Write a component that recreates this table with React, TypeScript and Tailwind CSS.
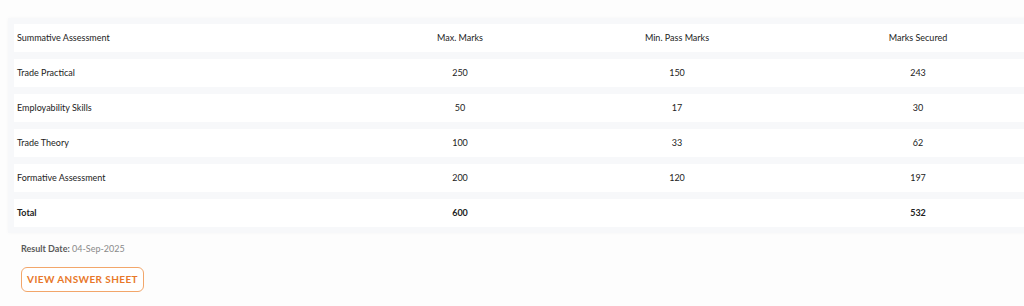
import { FC } from 'react'

type Row = { name: string; max: string; min: string; secured: string; bold?: boolean }

const rows: Row[] = [
  { name: 'Trade Practical', max: '250', min: '150', secured: '243' },
  { name: 'Employability Skills', max: '50', min: '17', secured: '30' },
  { name: 'Trade Theory', max: '100', min: '33', secured: '62' },
  { name: 'Formative Assessment', max: '200', min: '120', secured: '197' },
  { name: 'Total', max: '600', min: '', secured: '532', bold: true },
]

// fixed column widths, table runs past the right edge like the original
const cols = 'grid grid-cols-[336px_220px_214px_268px]'

const TableRow: FC<{ r: Row }> = ({ r }) => (
  <div className={`${cols} h-[28px] items-center bg-white text-[9px] text-[#222] ${r.bold ? 'font-bold' : ''}`}>
    <div className="pl-[3px]">{r.name}</div>
    <div className="text-center">{r.max}</div>
    <div className="text-center">{r.min}</div>
    <div className="text-center">{r.secured}</div>
  </div>
)

export default function App() {
  return (
    <div className="h-[306px] w-[1024px] overflow-hidden bg-[#fdfdfd] font-['Lato',sans-serif]">
      <div className="pt-[18px] pl-[8px]">
        <div className="flex w-[1050px] flex-col gap-[7px] bg-[#f7f8fa] py-[6px] pl-[6px] shadow-[0_0_4px_rgba(0,0,0,0.03)]">
          <TableRow r={{ name: 'Summative Assessment', max: 'Max. Marks', min: 'Min. Pass Marks', secured: 'Marks Secured' }} />
          {rows.map((r) => (
            <TableRow key={r.name} r={r} />
          ))}
        </div>
      </div>
      <div className="mt-[10px] pl-[21px] text-[9px] leading-[12px]">
        <span className="font-bold text-[#5a5a5a]">Result Date:</span>{' '}
        <span className="text-[#8a8a8a]">04-Sep-2025</span>
      </div>
      <div className="mt-[10px] pl-[21px]">
        <button className="h-[25px] w-[123px] rounded-[6px] border border-[#f2a66a] bg-white text-[10px] font-bold tracking-[0.4px] text-[#e8782a]">
          VIEW ANSWER SHEET
        </button>
      </div>
    </div>
  )
}
